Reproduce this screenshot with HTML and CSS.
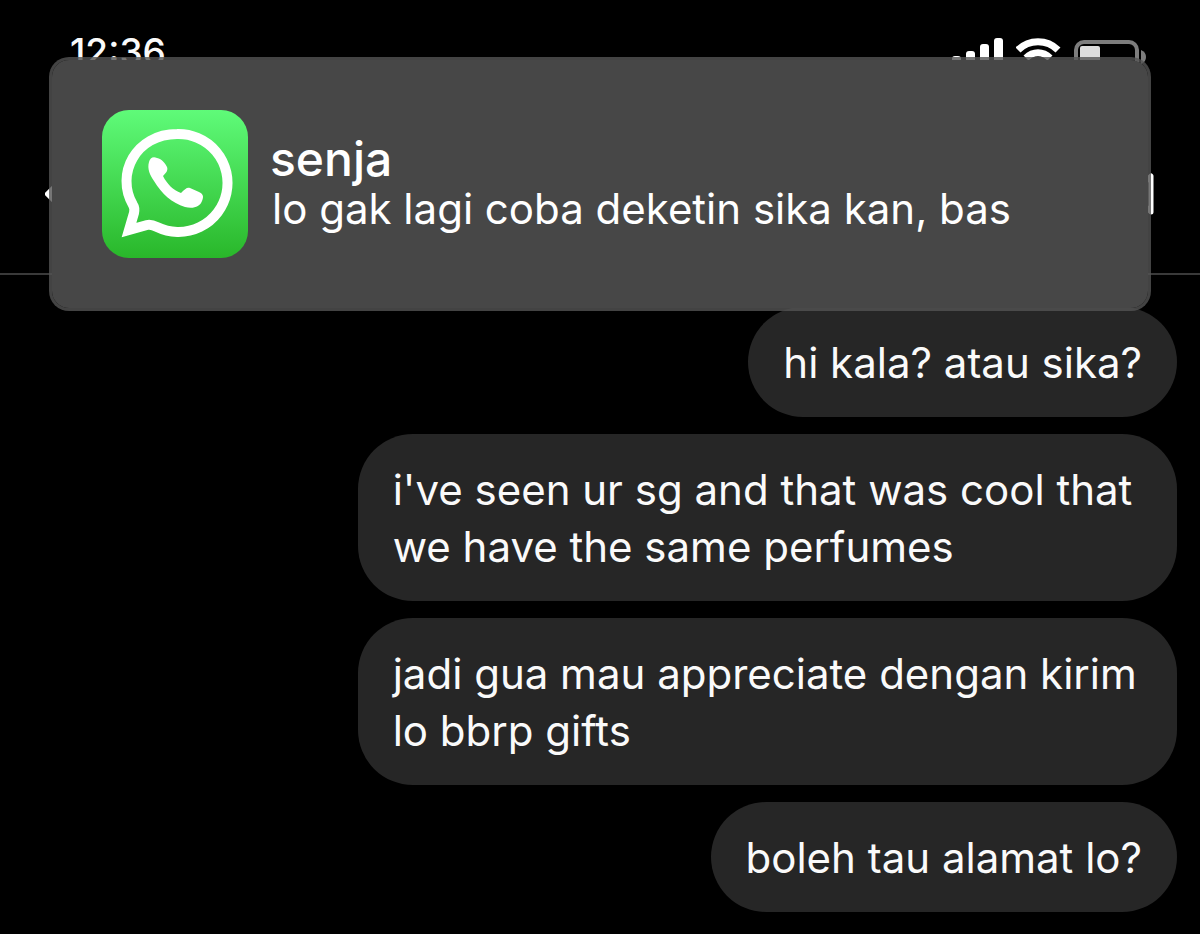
FILE: index.html
```html
<!DOCTYPE html>
<html lang="id">
<head>
    <meta charset="utf-8">
    <meta name="viewport" content="width=device-width, initial-scale=1">
    <title>Chat</title>
    <link rel="stylesheet" href="styles.css">
</head>
<body>
    <header class="top">
        <div class="status">
            <time class="clock">12:36</time>
            <div class="status-icons">
                <svg width="52" height="34" viewBox="0 0 52 34">
                    <g fill="#fff">
                        <rect x="0" y="18" width="9" height="10" rx="3"/>
                        <rect x="14" y="13" width="9" height="15" rx="3"/>
                        <rect x="28" y="6" width="9" height="22" rx="3"/>
                        <rect x="42" y="0" width="9" height="28" rx="3"/>
                    </g>
                </svg>
                <svg width="46" height="34" viewBox="0 0 46 34">
                    <g fill="none" stroke="#fff" stroke-width="7">
                        <path d="M2 12C13 1 31 1 42 12"/>
                        <path d="M10 20C17 13 27 13 34 20"/>
                    </g>
                    <path d="M15 26q7-6 14 0l-7 7z" fill="#fff"/>
                </svg>
                <svg width="74" height="34" viewBox="0 0 74 34">
                    <rect x="2" y="4" width="61" height="29" rx="8" fill="none" stroke="#7d7d7d" stroke-width="4"/>
                    <rect x="6" y="8" width="20" height="21" rx="2" fill="#ddd"/>
                    <path d="M67 12q5 2 5 7t-5 7z" fill="#7d7d7d"/>
                </svg>
            </div>
        </div>
        <nav class="chat-bar">
            <button class="icon-btn" aria-label="Back">
                <svg width="24" height="42" viewBox="0 0 24 42">
                    <path d="M21 3L3 21l18 18" fill="none" stroke="#fff" stroke-width="6" stroke-linecap="round" stroke-linejoin="round"/>
                </svg>
            </button>
            <button class="icon-btn" aria-label="Video call">
                <svg width="56" height="42" viewBox="0 0 56 42">
                    <g fill="none" stroke="#fff" stroke-width="5" stroke-linejoin="round">
                        <rect x="3" y="3" width="36" height="36" rx="8"/>
                        <path d="M39 17L53 3v36L39 25"/>
                    </g>
                </svg>
            </button>
        </nav>
    </header>

    <main class="messages">
        <p class="bubble">hi kala? atau sika?</p>
        <p class="bubble">i've seen ur sg and that was cool that we have the same perfumes</p>
        <p class="bubble">jadi gua mau appreciate dengan kirim lo bbrp gifts</p>
        <p class="bubble">boleh tau alamat lo?</p>
    </main>

    <aside class="banner">
        <svg class="app-icon" width="146" height="148" viewBox="0 0 146 148">
            <defs>
                <linearGradient id="green" x1="0" y1="0" x2="0" y2="1">
                    <stop offset="0" stop-color="#5ffb79"/>
                    <stop offset="1" stop-color="#29b72a"/>
                </linearGradient>
            </defs>
            <rect width="146" height="148" rx="27" fill="url(#green)"/>
            <path d="M27 120L32 103Q33 98 31 95C13 64 34 24 75 24a49 49 0 1 1-20 93Q49 114 45 115Z" fill="none" stroke="#fff" stroke-width="10" stroke-linejoin="miter"/>
            <path d="M55 48c-4-2-7 0-8 4-2 7 1 13 5 19 8 13 18 22 31 26 8 2 15 0 17-6 2-5 1-7-3-9l-9-4c-3-1-5 1-9 5-8-3-14-9-18-17 4-4 5-6 4-9-2-4-5-8-10-9z" fill="#fff"/>
        </svg>
        <div class="banner-text">
            <h1 class="sender">senja</h1>
            <p class="preview">lo gak lagi coba deketin sika kan, bas</p>
        </div>
    </aside>
</body>
</html>
```
FILE: styles.css
```css
* {
    box-sizing: border-box;
}

body {
    margin: 0;
    background: #000;
    color: #fafafa;
    font-family: Inter, "Liberation Sans", sans-serif;
}

svg {
    display: block;
}

.top {
    border-bottom: 2px solid #3a3a3a;
}

.status {
    display: flex;
    justify-content: space-between;
    align-items: flex-start;
    padding: 38px 52px 0 70px;
}

.clock {
    font-size: 37px;
    font-weight: 500;
    line-height: 28px;
}

.status-icons {
    display: flex;
    gap: 12px;
}

.chat-bar {
    display: flex;
    justify-content: space-between;
    align-items: center;
    padding: 101px 46px 58px 45px;
}

.icon-btn {
    padding: 0;
    border: 0;
    background: none;
}

.messages {
    display: flex;
    flex-direction: column;
    align-items: flex-end;
    gap: 17px;
    padding: 32px 23px 22px;
}

.bubble {
    max-width: 71%;
    margin: 0;
    padding: 27px 35px 26px;
    border-radius: 55px;
    background: #262626;
    font-size: 42px;
    line-height: 57px;
}

.banner {
    position: absolute;
    top: 57px;
    left: 49px;
    right: 49px;
    display: flex;
    align-items: center;
    gap: 22px;
    min-height: 254px;
    padding: 0 50px;
    border: 3px solid rgba(84, 84, 84, 0.8);
    border-radius: 20px;
    background: #474747;
    background-clip: padding-box;
    color: #fff;
}

.app-icon {
    flex: none;
}

.sender {
    margin: 0;
    font-size: 48px;
    font-weight: 500;
    line-height: 50px;
}

.preview {
    margin: 0;
    padding-left: 2px;
    font-size: 42px;
    line-height: 50px;
}
```
